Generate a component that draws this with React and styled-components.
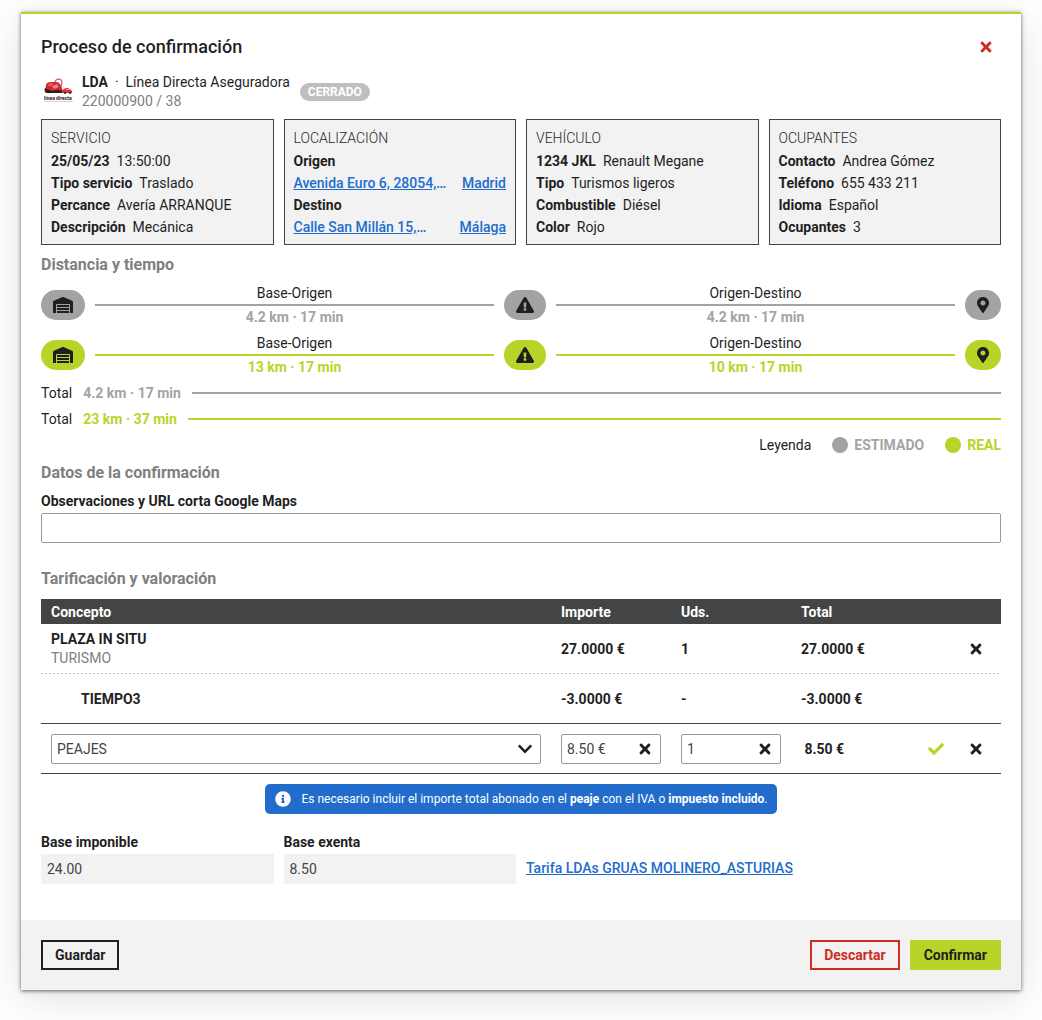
import React, { useState } from 'react';
import styled, { createGlobalStyle, css } from 'styled-components';
import {
  FaCheck,
  FaChevronDown,
  FaExclamationTriangle,
  FaInfoCircle,
  FaMapMarkerAlt,
  FaTimes,
  FaWarehouse,
} from 'react-icons/fa';

const colors = {
  green: '#b9d428',
  gray: '#a3a3a3',
  dark: '#1f1f1f',
  header: '#444',
  muted: '#808080',
  light: '#f2f2f2',
  blue: '#226dcb',
  red: '#d02b20',
};

const GlobalStyle = createGlobalStyle`
  *, *::before, *::after {
    box-sizing: border-box;
  }

  body {
    margin: 0;
    background: #fff;
    color: ${colors.dark};
    font-family: Roboto, "Liberation Sans", sans-serif;
    font-size: 14px;
    line-height: 20px;
  }

  button, input, select {
    font-family: inherit;
    font-size: 14px;
    color: inherit;
  }
`;

const Modal = styled.main`
  margin: 12px 21px 30px;
  border-top: 2px solid ${colors.green};
  background: #fff;
  box-shadow: 0 1px 4px rgba(0, 0, 0, 0.6), 0 8px 40px rgba(0, 0, 0, 0.12);
`;

const Body = styled.div`
  padding: 18px 20px 36px;
`;

const Header = styled.header`
  display: flex;
  align-items: center;
  justify-content: space-between;
  height: 30px;
`;

const Title = styled.h1`
  margin: 0;
  font-size: 18px;
  font-weight: 500;
`;

const IconButton = styled.button`
  display: flex;
  align-items: center;
  justify-content: center;
  width: 30px;
  height: 28px;
  padding: 0;
  border: none;
  background: none;
  color: ${({ $color }) => $color || colors.dark};
  font-size: 16px;
  cursor: pointer;
`;

const Client = styled.div`
  display: flex;
  align-items: center;
  margin: 11px 0 8px;
  padding-left: 2px;
`;

const Logo = styled.svg`
  width: 32px;
  height: 28px;
  margin-right: 7px;
`;

const ClientName = styled.div`
  line-height: 19px;
`;

const Reference = styled.div`
  color: ${colors.muted};
`;

const Status = styled.span`
  margin-left: 10px;
  padding: 0 8px;
  border-radius: 9px;
  background: #bfbfbf;
  color: #fff;
  font-size: 12px;
  font-weight: 700;
  line-height: 18px;
`;

const Cards = styled.div`
  display: grid;
  grid-template-columns: repeat(4, minmax(0, 1fr));
  gap: 10px;
`;

const Card = styled.section`
  padding: 6px 9px;
  border: 1px solid ${colors.header};
  background: ${colors.light};
  line-height: 22px;
`;

const CardTitle = styled.h2`
  margin: 0;
  font-size: 14px;
  font-weight: 300;
  line-height: 24px;
`;

const Line = styled.div`
  display: flex;
  gap: 7px;
`;

const Address = styled.div`
  display: flex;
  justify-content: space-between;
  gap: 10px;
`;

const Link = styled.a`
  color: ${colors.blue};
  font-weight: 500;
  white-space: nowrap;
`;

const Ellipsis = styled.span`
  display: inline-block;
`;

const SectionTitle = styled.h2`
  margin: 0;
  color: ${colors.muted};
  font-size: 16px;
  font-weight: 700;
  line-height: 20px;
`;

const Distance = styled.section`
  padding-top: 10px;
`;

const Routes = styled.div`
  padding-top: 5px;
`;

const Route = styled.div`
  display: flex;
  align-items: center;
  gap: 10px;
  height: 50px;
`;

const Pill = styled.span`
  display: flex;
  flex-shrink: 0;
  align-items: center;
  height: 30px;
  padding: 0 12px;
  border-radius: 15px;
  background: ${({ $color }) => $color};
  color: ${colors.dark};

  svg {
    width: ${({ $iconWidth }) => $iconWidth};
    height: 16px;
  }
`;

const Segment = styled.div`
  flex: 1;
  text-align: center;
  line-height: 22px;
`;

const SegmentName = styled.div`
  border-bottom: 2px solid ${({ $color }) => $color};
`;

const TotalRow = styled.div`
  display: flex;
  align-items: center;
  gap: 11px;
  height: 26px;
`;

const Measure = styled.strong`
  color: ${({ $color }) => $color};
`;

const Rule = styled.span`
  flex: 1;
  height: 2px;
  background: ${({ $color }) => $color};
`;

const Legend = styled.div`
  display: flex;
  align-items: center;
  justify-content: flex-end;
  gap: 21px;
  height: 26px;
`;

const LegendItem = styled.span`
  display: flex;
  align-items: center;
  gap: 6px;
  color: ${({ $color }) => $color};
  font-weight: 700;

  &::before {
    content: '';
    width: 16px;
    height: 16px;
    border-radius: 50%;
    background: currentColor;
  }
`;

const Confirmation = styled.section`
  padding: 5px 0 26px;
`;

const Label = styled.label`
  display: block;
  font-weight: 700;
  line-height: 24px;
`;

const fieldStyle = css`
  width: 100%;
  height: 30px;
  padding: 0 5px;
  border: 1px solid #999;
  border-radius: 2px;
  background: #fff;
  color: #444;
`;

const Input = styled.input`
  ${fieldStyle}
`;

const ConfirmationLabel = styled(Label)`
  margin-top: 6px;
`;

const Table = styled.table`
  width: 100%;
  margin-top: 10px;
  border-spacing: 0;
  table-layout: fixed;
`;

const Th = styled.th`
  width: ${({ $width }) => $width || 'auto'};
  height: 25px;
  padding: 0 10px;
  background: ${colors.header};
  color: #fff;
  font-weight: 700;
  text-align: left;
`;

const solidLine = `linear-gradient(${colors.header}, ${colors.header})`;
const dashedLine = 'repeating-linear-gradient(90deg, #bbb 0 2px, transparent 2px 4px)';

const Tr = styled.tr`
  height: 50px;
  background: ${({ $dashed }) => ($dashed ? dashedLine : solidLine)} bottom / 100% 1px no-repeat;
`;

const Td = styled.td`
  padding: 0 10px 0 ${({ $indent }) => ($indent ? '40px' : '10px')};
  font-weight: 700;
  line-height: 19px;
`;

const Detail = styled.div`
  color: ${colors.muted};
  font-weight: 400;
`;

const Actions = styled.div`
  display: flex;
  justify-content: flex-end;
  gap: 10px;
`;

const SelectBox = styled.div`
  position: relative;

  svg {
    position: absolute;
    top: 7px;
    right: 8px;
    pointer-events: none;
  }
`;

const Select = styled.select`
  ${fieldStyle}
  display: block;
  appearance: none;
`;

const FieldBox = styled.div`
  ${fieldStyle}
  display: flex;
  align-items: center;
  padding: 0;
`;

const BareInput = styled.input`
  flex: 1;
  min-width: 0;
  padding: 0 5px;
  border: none;
  background: none;
  color: #444;
`;

const Notice = styled.p`
  display: flex;
  align-items: center;
  gap: 10px;
  width: fit-content;
  height: 30px;
  margin: 10px auto 16px;
  padding: 0 9px 0 10px;
  border-radius: 5px;
  background: ${colors.blue};
  color: #fff;
  font-size: 12px;

  svg {
    font-size: 16px;
  }
`;

const Bases = styled(Cards)`
  align-items: end;
`;

const ReadOnlyInput = styled(Input)`
  display: block;
  border-color: ${colors.light};
  border-radius: 0;
  background: ${colors.light};
`;

const RateLink = styled(Link)`
  grid-column: span 2;
  line-height: 32px;
`;

const Footer = styled.footer`
  display: flex;
  gap: 10px;
  padding: 20px;
  background: ${colors.light};
`;

const Button = styled.button`
  height: 30px;
  padding: 0 12px;
  border: 2px solid ${({ $color }) => $color};
  background: ${({ $filled, $color }) => ($filled ? $color : 'transparent')};
  color: ${({ $filled, $color }) => ($filled ? colors.dark : $color)};
  font-weight: 700;
  cursor: pointer;

  &:first-child {
    margin-right: auto;
  }
`;

const details = [
  {
    title: 'SERVICIO',
    lines: [
      ['25/05/23', '13:50:00'],
      ['Tipo servicio', 'Traslado'],
      ['Percance', 'Avería ARRANQUE'],
      ['Descripción', 'Mecánica'],
    ],
  },
  {
    title: 'LOCALIZACIÓN',
    places: [
      ['Origen', 'Avenida Euro 6, 28054,', 'Madrid'],
      ['Destino', 'Calle San Millán 15,', 'Málaga'],
    ],
  },
  {
    title: 'VEHÍCULO',
    lines: [
      ['1234 JKL', 'Renault Megane'],
      ['Tipo', 'Turismos ligeros'],
      ['Combustible', 'Diésel'],
      ['Color', 'Rojo'],
    ],
  },
  {
    title: 'OCUPANTES',
    lines: [
      ['Contacto', 'Andrea Gómez'],
      ['Teléfono', '655 433 211'],
      ['Idioma', 'Español'],
      ['Ocupantes', '3'],
    ],
  },
];

const routes = [
  { color: colors.gray, base: '4.2 km · 17 min', destination: '4.2 km · 17 min', total: '4.2 km · 17 min' },
  { color: colors.green, base: '13 km · 17 min', destination: '10 km · 17 min', total: '23 km · 37 min' },
];

const ClientLogo = () => (
  <Logo viewBox="0 0 32 28" role="img" aria-label="Línea Directa">
    <path d="M12 5c0-5 7-5 7-1 0 2-1 3-1 5" fill="none" stroke="#d5535a" strokeWidth="1.1" />
    <path d="M3 8c0-3 2-4 5-4h5c3 0 4 2 5 4l2 5-5 2H4c-2 0-2-4-1-7z" fill="#cf2730" />
    <path d="M5 7l2-2h3l-1 3H5z" fill="#e8565e" />
    <path d="M9 8l5-2 2 3-5 2z" fill="#ec8588" />
    <path d="M2 10l5 3 8-1 5 1v2H4c-2 0-3-3-2-5z" fill="#37191c" />
    <circle cx="6" cy="13.5" r="1.8" fill="#221518" />
    <path d="M19 13c1-2 3-3 5-3s3 1 5 3v2H19z" fill="#d8323a" />
    <path d="M22 12l2-1h2l1 1z" fill="#f5a0a0" />
    <circle cx="22" cy="15" r="1.1" fill="#381c20" />
    <circle cx="27" cy="15" r="1.1" fill="#381c20" />
    <text x="1" y="22" fontSize="5" fontWeight="700" fill="#26171c">
      línea directa
    </text>
    <path d="M1 23.5h29" stroke="#e2a5a7" strokeWidth="0.6" />
  </Logo>
);

const DetailCard = ({ title, lines = [], places = [] }) => (
  <Card>
    <CardTitle>{title}</CardTitle>
    {lines.map(([name, value]) => (
      <Line key={name}>
        <strong>{name}</strong>
        <span>{value}</span>
      </Line>
    ))}
    {places.map(([name, address, city]) => (
      <div key={name}>
        <strong>{name}</strong>
        <Address>
          <Link href="#mapa">
            {address}
            <Ellipsis>…</Ellipsis>
          </Link>
          <Link href="#mapa">{city}</Link>
        </Address>
      </div>
    ))}
  </Card>
);

const RouteRow = ({ color, base, destination }) => (
  <Route>
    <Pill $color={color} $iconWidth="20px"><FaWarehouse /></Pill>
    <Segment>
      <SegmentName $color={color}>Base-Origen</SegmentName>
      <Measure $color={color}>{base}</Measure>
    </Segment>
    <Pill $color={color} $iconWidth="18px"><FaExclamationTriangle /></Pill>
    <Segment>
      <SegmentName $color={color}>Origen-Destino</SegmentName>
      <Measure $color={color}>{destination}</Measure>
    </Segment>
    <Pill $color={color} $iconWidth="12px"><FaMapMarkerAlt /></Pill>
  </Route>
);

const ClearableInput = ({ label, initial }) => {
  const [value, setValue] = useState(initial);

  return (
    <FieldBox>
      <BareInput aria-label={label} value={value} onChange={(e) => setValue(e.target.value)} />
      <IconButton type="button" aria-label={`Borrar ${label}`} onClick={() => setValue('')}>
        <FaTimes />
      </IconButton>
    </FieldBox>
  );
};

const App = () => {
  return (
    <>
      <GlobalStyle />
      <Modal>
        <Body>
          <Header>
            <Title>Proceso de confirmación</Title>
            <IconButton type="button" $color={colors.red} aria-label="Cerrar">
              <FaTimes />
            </IconButton>
          </Header>

          <Client>
            <ClientLogo />
            <ClientName>
              <strong>LDA</strong>&nbsp; ·&nbsp; Línea Directa Aseguradora
              <Reference>220000900 / 38</Reference>
            </ClientName>
            <Status>CERRADO</Status>
          </Client>

          <Cards>
            {details.map((card) => (
              <DetailCard key={card.title} {...card} />
            ))}
          </Cards>

          <Distance>
            <SectionTitle>Distancia y tiempo</SectionTitle>
            <Routes>
              {routes.map((route) => (
                <RouteRow key={route.color} {...route} />
              ))}
            </Routes>
            {routes.map(({ color, total }) => (
              <TotalRow key={color}>
                Total
                <Measure $color={color}>{total}</Measure>
                <Rule $color={color} />
              </TotalRow>
            ))}
            <Legend>
              Leyenda
              <LegendItem $color={colors.gray}>ESTIMADO</LegendItem>
              <LegendItem $color={colors.green}>REAL</LegendItem>
            </Legend>
          </Distance>

          <Confirmation>
            <SectionTitle>Datos de la confirmación</SectionTitle>
            <ConfirmationLabel htmlFor="observaciones">
              Observaciones y URL corta Google Maps
            </ConfirmationLabel>
            <Input id="observaciones" type="text" />
          </Confirmation>

          <SectionTitle>Tarificación y valoración</SectionTitle>
          <Table>
            <thead>
              <tr>
                <Th>Concepto</Th>
                <Th $width="120px">Importe</Th>
                <Th $width="120px">Uds.</Th>
                <Th $width="120px">Total</Th>
                <Th $width="90px" aria-label="Acciones" />
              </tr>
            </thead>
            <tbody>
              <Tr $dashed>
                <Td>
                  PLAZA IN SITU
                  <Detail>TURISMO</Detail>
                </Td>
                <Td>27.0000 €</Td>
                <Td>1</Td>
                <Td>27.0000 €</Td>
                <Td>
                  <Actions>
                    <IconButton type="button" aria-label="Eliminar"><FaTimes /></IconButton>
                  </Actions>
                </Td>
              </Tr>
              <Tr>
                <Td $indent>TIEMPO3</Td>
                <Td>-3.0000 €</Td>
                <Td>-</Td>
                <Td>-3.0000 €</Td>
                <Td />
              </Tr>
              <Tr>
                <Td>
                  <SelectBox>
                    <Select aria-label="Concepto" defaultValue="PEAJES">
                      <option>PEAJES</option>
                    </Select>
                    <FaChevronDown size={16} />
                  </SelectBox>
                </Td>
                <Td><ClearableInput label="Importe" initial="8.50 €" /></Td>
                <Td><ClearableInput label="Uds." initial="1" /></Td>
                <Td>&nbsp;8.50 €</Td>
                <Td>
                  <Actions>
                    <IconButton type="button" $color={colors.green} aria-label="Aceptar"><FaCheck /></IconButton>
                    <IconButton type="button" aria-label="Cancelar"><FaTimes /></IconButton>
                  </Actions>
                </Td>
              </Tr>
            </tbody>
          </Table>

          <Notice>
            <FaInfoCircle />
            <span>
              Es necesario incluir el importe total abonado en el <strong>peaje</strong> con el IVA o{' '}
              <strong>impuesto incluido</strong>.
            </span>
          </Notice>

          <Bases>
            <div>
              <Label htmlFor="imponible">Base imponible</Label>
              <ReadOnlyInput id="imponible" readOnly value="24.00" />
            </div>
            <div>
              <Label htmlFor="exenta">Base exenta</Label>
              <ReadOnlyInput id="exenta" readOnly value="8.50" />
            </div>
            <RateLink href="#tarifa">Tarifa LDAs GRUAS MOLINERO_ASTURIAS</RateLink>
          </Bases>
        </Body>

        <Footer>
          <Button type="button" $color={colors.dark}>Guardar</Button>
          <Button type="button" $color={colors.red}>Descartar</Button>
          <Button type="button" $color={colors.green} $filled>Confirmar</Button>
        </Footer>
      </Modal>
    </>
  );
};

export default App;
